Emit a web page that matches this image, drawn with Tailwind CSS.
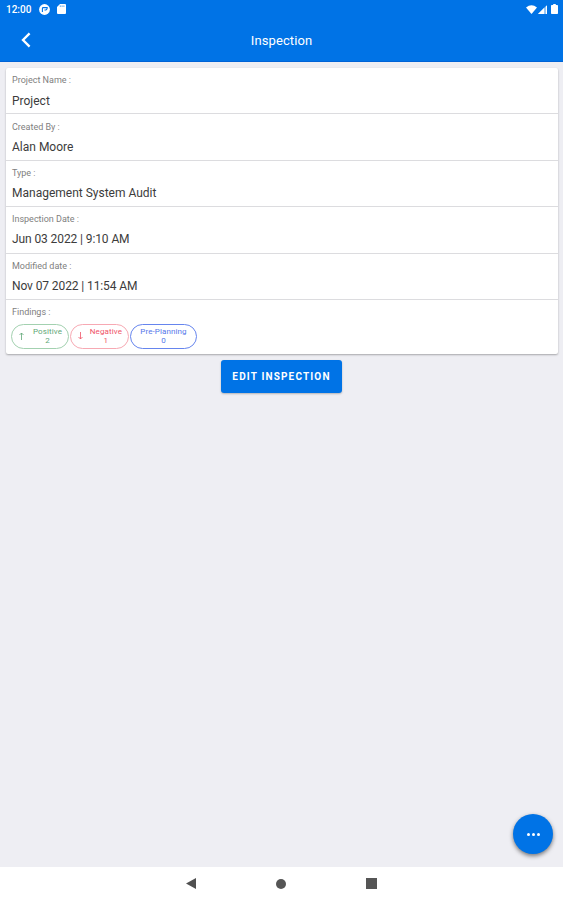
<!DOCTYPE html>
<html lang="en">
  <head>
    <meta charset="UTF-8" />
    <meta name="viewport" content="width=device-width, initial-scale=1.0" />
    <script src="https://cdn.jsdelivr.net/npm/@tailwindcss/browser@4"></script>
    <title>Inspection</title>
  </head>
  <body class="font-['Roboto',sans-serif]">
    <div class="relative flex flex-col w-full h-[900px] overflow-hidden bg-[#eeeef3]">
      <!-- Status bar + header -->
      <header class="h-[62px] shrink-0 bg-[#0073e6] text-white border-b border-[#0063d6]">
        <div class="flex items-center justify-between h-[18px] pl-[6px] pr-[5px]">
          <div class="flex items-center">
            <span class="w-[33px] pt-px text-[10px] leading-[17px] font-medium">12:00</span>
            <svg class="w-[11px] h-[11px]" viewBox="0 0 11 11">
              <circle cx="5.5" cy="5.5" r="5.4" fill="#fff" />
              <path d="M3.4 8V4.4A.8 .8 0 0 1 4.2 3.6H8.2A2.2 2.2 0 0 1 6 6H5.4" fill="none" stroke="#0073e6" stroke-width="1.1" />
            </svg>
            <svg class="w-[9px] h-[10px] ml-[7px]" viewBox="0 0 9 10">
              <path d="M3 0H8A1 1 0 0 1 9 1V9A1 1 0 0 1 8 10H1A1 1 0 0 1 0 9V3Z" fill="#fff" />
              <path d="M3.3 1.4V3M5.1 1.4V3M6.9 1.4V3" stroke="#0073e6" stroke-width=".6" />
            </svg>
          </div>
          <div class="flex items-center">
            <svg class="w-[11px] h-[9px]" viewBox="0 0 11 9">
              <path d="M0 2.4Q5.5-2 11 2.4L5.5 9Z" fill="#fff" />
            </svg>
            <svg class="w-[9px] h-[9px] ml-[1px]" viewBox="0 0 9 9">
              <path d="M0 9L9 0V9Z" fill="#fff" fill-opacity=".6" />
              <path d="M0 9L6 3V9Z" fill="#fff" />
              <path d="M8.5 1V9" stroke="#fff" />
            </svg>
            <svg class="w-[7px] h-[10px] ml-[4px]" viewBox="0 0 7 10">
              <path d="M2.2 0H4.8V1H6.2A.8 .8 0 0 1 7 1.8V9.2A.8 .8 0 0 1 6.2 10H.8A.8 .8 0 0 1 0 9.2V1.8A.8 .8 0 0 1 .8 1H2.2Z" fill="#fff" />
            </svg>
          </div>
        </div>
        <div class="grid grid-cols-[1fr_auto_1fr] items-center h-[44px]">
          <button class="ml-[21px] w-[10px]" aria-label="Back">
            <svg class="w-[10px] h-[16px]" viewBox="0 0 10 16">
              <path d="M8.6 1.4L2 8L8.6 14.6" fill="none" stroke="#fff" stroke-width="2.3" />
            </svg>
          </button>
          <h1 class="pt-[2px] text-[13px] leading-[16px] tracking-[0.1px]">Inspection</h1>
        </div>
      </header>

      <!-- Inspection details -->
      <main class="flex flex-col items-center pt-[6px] pl-[6px] pr-[5px]">
        <section class="w-full h-[286px] bg-white rounded-[2px] shadow-[0_1px_2px_rgba(0,0,0,0.3)] divide-y divide-[#dcdcdf] text-[#3c3c3c]">
          <div class="h-[46.4px] pl-[6px] pt-[6px]">
            <p class="text-[9px] leading-[13px] text-[#808080]">Project Name :</p>
            <p class="mt-[6.6px] text-[12px] leading-[15px]">Project</p>
          </div>
          <div class="h-[46.4px] pl-[6px] pt-[6.6px]">
            <p class="text-[9px] leading-[13px] text-[#808080]">Created By :</p>
            <p class="mt-[6px] text-[12px] leading-[15px]">Alan Moore</p>
          </div>
          <div class="h-[46.4px] pl-[6px] pt-[6px]">
            <p class="text-[9px] leading-[13px] text-[#808080]">Type :</p>
            <p class="mt-[6px] text-[12px] leading-[15px]">Management System Audit</p>
          </div>
          <div class="h-[46.4px] pl-[6px] pt-[6px]">
            <p class="text-[9px] leading-[13px] text-[#808080]">Inspection Date :</p>
            <p class="mt-[6px] text-[12px] leading-[15px] tracking-[-0.1px]">Jun 03 2022 | 9:10 AM</p>
          </div>
          <div class="h-[46.4px] pl-[6px] pt-[6px]">
            <p class="text-[9px] leading-[13px] text-[#808080]">Modified date :</p>
            <p class="mt-[6px] text-[12px] leading-[15px] tracking-[-0.1px]">Nov 07 2022 | 11:54 AM</p>
          </div>
          <div class="pl-[5px] pt-[6px]">
            <p class="pl-px text-[9px] leading-[13px] text-[#808080]">Findings :</p>
            <div class="flex mt-[5px] gap-[1px] text-[8px] leading-[9px] tracking-[0.1px] text-center">
              <div class="flex items-center justify-between w-[58px] h-[25px] pl-[7px] pr-[6px] border border-[#a3d1b0] rounded-full text-[#5fa777]">
                <svg class="w-[5px] h-[8px]" viewBox="0 0 5 8">
                  <path d="M2.5 8V1M.5 3L2.5 1L4.5 3" fill="none" stroke="currentColor" stroke-width=".8" />
                </svg>
                <p>Positive<br />2</p>
              </div>
              <div class="flex items-center justify-between w-[59px] h-[25px] pl-[7px] pr-[6px] border border-[#f7a9b3] rounded-full text-[#ef5366]">
                <svg class="w-[5px] h-[8px]" viewBox="0 0 5 8">
                  <path d="M2.5 0V7M.5 5L2.5 7L4.5 5" fill="none" stroke="currentColor" stroke-width=".8" />
                </svg>
                <p>Negative<br />1</p>
              </div>
              <div class="flex items-center justify-center w-[67px] h-[25px] border border-[#6685ee] rounded-full text-[#5577ea]">
                <p>Pre-Planning<br />0</p>
              </div>
            </div>
          </div>
        </section>
        <button class="mt-[6px] w-[121px] h-[33px] mr-px rounded-[3px] bg-[#0073e6] text-white text-[10px] font-bold tracking-[1.15px] shadow-[0_1px_2px_rgba(0,0,0,0.25)]">EDIT INSPECTION</button>
      </main>

      <!-- Floating menu button -->
      <button class="absolute left-[513px] top-[814px] flex items-center justify-center gap-[2px] w-[40px] h-[40px] rounded-full bg-[#0073e6] shadow-[0_2px_4px_rgba(0,0,0,0.5)]" aria-label="More">
        <span class="w-[3px] h-[3px] rounded-full bg-white"></span>
        <span class="w-[3px] h-[3px] rounded-full bg-white"></span>
        <span class="w-[3px] h-[3px] rounded-full bg-white"></span>
      </button>

      <!-- System navigation -->
      <nav class="flex items-center justify-center gap-[80px] h-[33px] mt-auto bg-white text-[#505050]">
        <svg class="w-[10px] h-[11px]" viewBox="0 0 10 11">
          <path d="M0 5.5L10 0V11Z" fill="currentColor" />
        </svg>
        <span class="w-[10px] h-[10px] rounded-full bg-[#555]"></span>
        <span class="w-[11px] h-[11px] bg-[#555]"></span>
      </nav>
    </div>
  </body>
</html>
